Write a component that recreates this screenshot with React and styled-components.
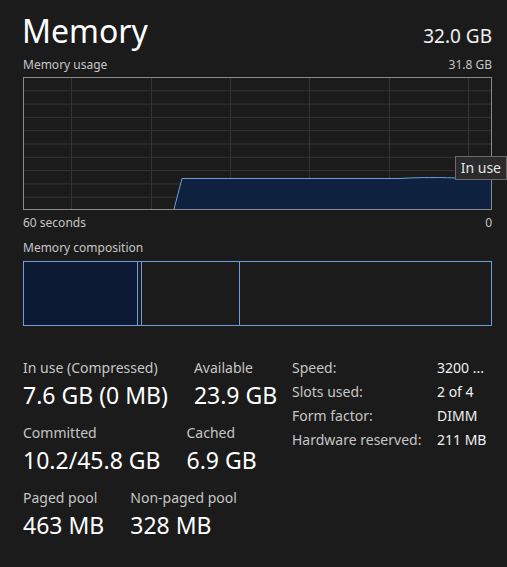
import React from "react";
import styled, { createGlobalStyle } from "styled-components";

const Global = createGlobalStyle`
  html, body {
    margin: 0;
    padding: 0;
    background: #1b1b1b;
  }
  body {
    font-family: "Noto Sans", "Open Sans", sans-serif;
    color: #ffffff;
  }
`;

const Page = styled.div`
  width: 507px;
  height: 567px;
  box-sizing: border-box;
  padding: 6px 15px 0 23px;
  display: flex;
  flex-direction: column;
`;

const Header = styled.div`
  display: flex;
  justify-content: space-between;
  align-items: flex-end;
  height: 46px;
`;

const Title = styled.div`
  font-size: 32px;
  line-height: 42px;
  color: #ffffff;
  margin-left: -1px;
`;

const Total = styled.div`
  font-size: 19px;
  line-height: 26px;
  color: #f0f0f0;
  margin-bottom: 3px;
`;

const Caption = styled.div`
  display: flex;
  justify-content: space-between;
  font-size: 12px;
  line-height: 18px;
  color: #c6c6c6;
  margin-top: ${(p) => p.top || 0}px;
  height: 18px;
`;

const Chart = styled.div`
  position: relative;
  height: 133px;
  box-sizing: border-box;
  border: 1px solid #8a8a8a;
  margin-top: 3px;
  svg {
    display: block;
  }
`;

const Tip = styled.div`
  position: absolute;
  right: -16px;
  top: 78px;
  height: 24px;
  box-sizing: border-box;
  padding: 0 5px;
  background: #2b2b2b;
  border: 1px solid #6a6a6a;
  font-size: 14px;
  line-height: 21px;
  color: #e6e6e6;
`;

const Composition = styled.div`
  display: flex;
  height: 65px;
  box-sizing: border-box;
  border: 1px solid #6f9be0;
  margin-top: 4px;
`;

const Segment = styled.div`
  box-sizing: border-box;
  width: ${(p) => p.w}px;
  flex: ${(p) => (p.w ? "none" : 1)};
  background: ${(p) => (p.filled ? "#0c1a33" : "transparent")};
  border-right: ${(p) => (p.last ? "none" : "1px solid #6f9be0")};
`;

const Stats = styled.div`
  display: flex;
  justify-content: space-between;
  margin-top: 32px;
`;

const Left = styled.div`
  display: flex;
  flex-direction: column;
  gap: 11px;
`;

const StatRow = styled.div`
  display: flex;
  gap: 26px;
`;

const Stat = styled.div`
  display: flex;
  flex-direction: column;
`;

const Label = styled.div`
  font-size: 14px;
  line-height: 20px;
  color: #c6c6c6;
  white-space: nowrap;
`;

const Value = styled.div`
  font-size: 23px;
  line-height: 34px;
  color: #ffffff;
  white-space: nowrap;
`;

const Specs = styled.div`
  display: grid;
  grid-template-columns: 145px 55px;
  grid-auto-rows: 24px;
  margin-top: -2px;
`;

const SpecKey = styled.div`
  font-size: 14px;
  line-height: 24px;
  color: #c6c6c6;
  white-space: nowrap;
`;

const SpecVal = styled.div`
  font-size: 14px;
  line-height: 24px;
  color: #f0f0f0;
  white-space: nowrap;
`;

const gridX = [48, 128, 207, 286, 366, 445];

const UsageGraph = () => (
  <svg width="467" height="131" viewBox="0 0 467 131">
    {Array.from({ length: 9 }).map((_, i) => (
      <line
        key={"h" + i}
        x1="0"
        x2="467"
        y1={13.3 * (i + 1) - 0.5}
        y2={13.3 * (i + 1) - 0.5}
        stroke="#343434"
      />
    ))}
    {gridX.map((x) => (
      <line key={"v" + x} x1={x - 0.5} x2={x - 0.5} y1="0" y2="131" stroke="#343434" />
    ))}
    <path
      d="M150 131 L158 100.5 L376 100.5 C390 99.5 420 99 440 100.5 L467 100.5 L467 131 Z"
      fill="#0e213f"
    />
    <path
      d="M150 131 L158 100.5 L376 100.5 C390 99.5 420 99 440 100.5 L467 100.5"
      fill="none"
      stroke="#6d9ddb"
      strokeWidth="1"
    />
  </svg>
);

const stats = [
  [
    ["In use (Compressed)", "7.6 GB (0 MB)"],
    ["Available", "23.9 GB"],
  ],
  [
    ["Committed", "10.2/45.8 GB"],
    ["Cached", "6.9 GB"],
  ],
  [
    ["Paged pool", "463 MB"],
    ["Non-paged pool", "328 MB"],
  ],
];

const specs = [
  ["Speed:", "3200 ..."],
  ["Slots used:", "2 of 4"],
  ["Form factor:", "DIMM"],
  ["Hardware reserved:", "211 MB"],
];

export default function App() {
  return (
    <>
      <Global />
      <Page>
        <Header>
          <Title>Memory</Title>
          <Total>32.0 GB</Total>
        </Header>
        <Caption top={4}>
          <span>Memory usage</span>
          <span>31.8 GB</span>
        </Caption>
        <Chart>
          <UsageGraph />
          <Tip>In use</Tip>
        </Chart>
        <Caption top={4}>
          <span>60 seconds</span>
          <span>0</span>
        </Caption>
        <Caption top={7}>
          <span>Memory composition</span>
        </Caption>
        <Composition>
          <Segment filled w={114} />
          <Segment w={4} />
          <Segment w={98} />
          <Segment last />
        </Composition>
        <Stats>
          <Left>
            {stats.map((row, i) => (
              <StatRow key={i}>
                {row.map(([l, v]) => (
                  <Stat key={l}>
                    <Label>{l}</Label>
                    <Value>{v}</Value>
                  </Stat>
                ))}
              </StatRow>
            ))}
          </Left>
          <Specs>
            {specs.map(([k, v]) => (
              <React.Fragment key={k}>
                <SpecKey>{k}</SpecKey>
                <SpecVal>{v}</SpecVal>
              </React.Fragment>
            ))}
          </Specs>
        </Stats>
      </Page>
    </>
  );
}
